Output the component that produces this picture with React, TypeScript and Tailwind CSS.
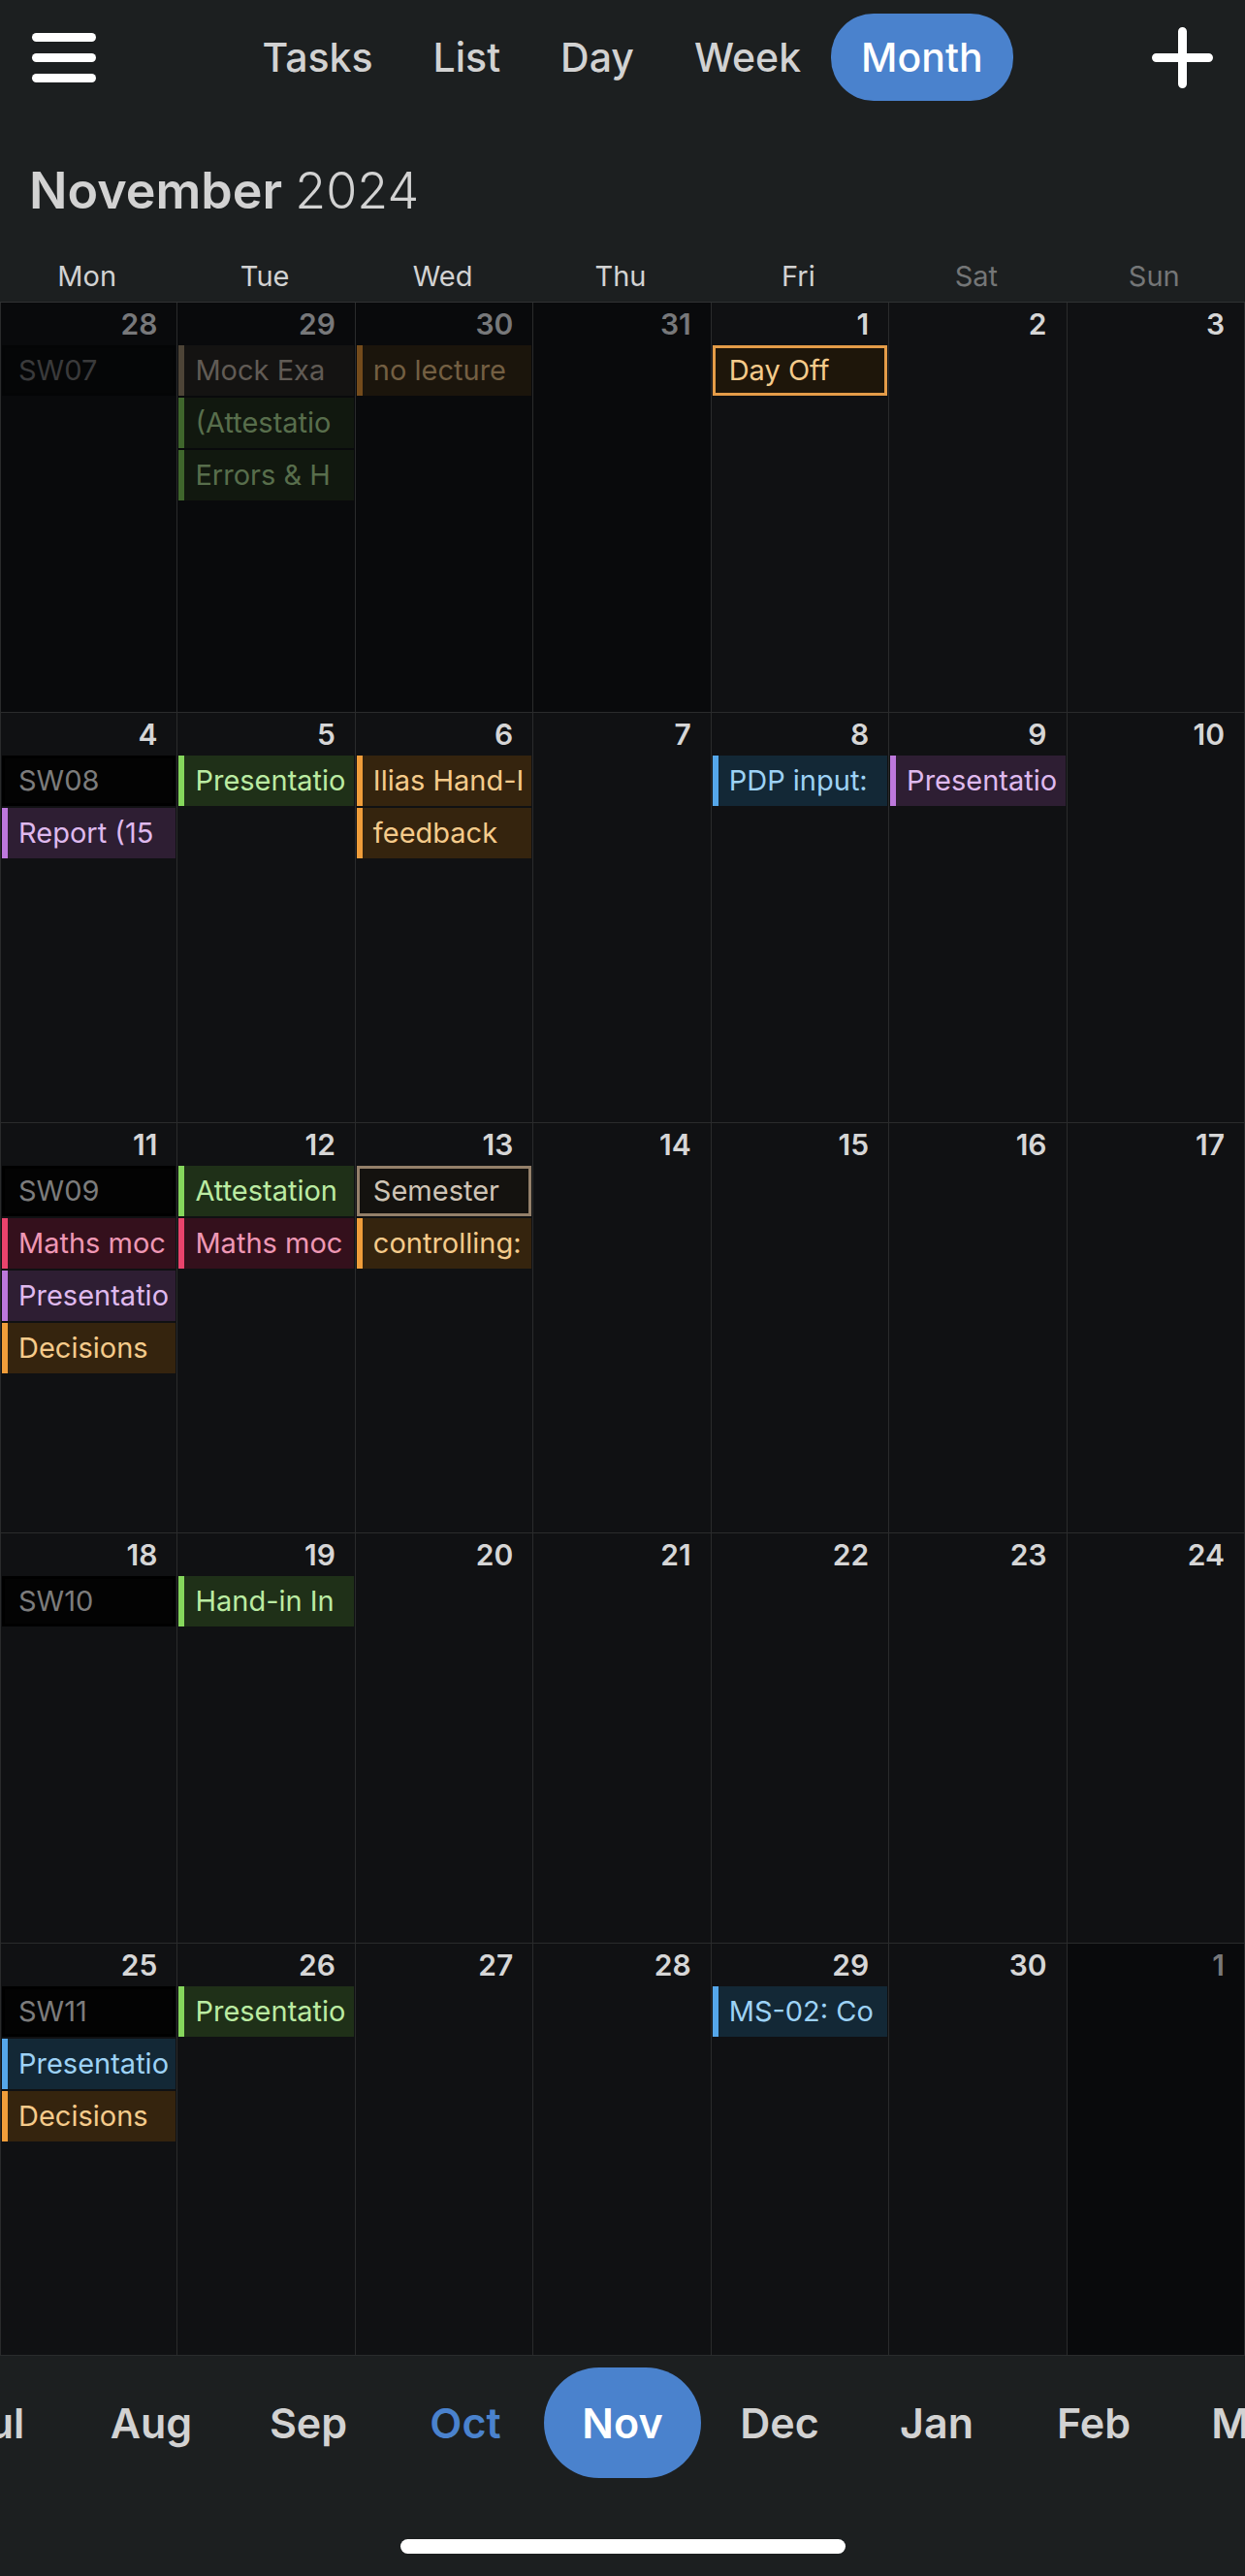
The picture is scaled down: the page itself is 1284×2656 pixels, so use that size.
type Tone = "green" | "orange" | "purple" | "blue" | "red" | "sand" | "orangeOutline" | "sandOutline" | "week";

type CalendarEvent = { title: string; tone: Tone };
type Day = { date: number; outside?: boolean; events?: CalendarEvent[] };

const tones: Record<Tone, string> = {
  green: "border-l-[6px] border-[#85d65c] bg-[#1f3018] text-[#bbeba2] pl-[11px]",
  orange: "border-l-[6px] border-[#f09d3a] bg-[#35240e] text-[#f5cb8b] pl-[11px]",
  purple: "border-l-[6px] border-[#bd78dc] bg-[#2e1e33] text-[#dfb9ee] pl-[11px]",
  blue: "border-l-[6px] border-[#55a7ea] bg-[#132836] text-[#9dd2f5] pl-[11px]",
  red: "border-l-[6px] border-[#e9436c] bg-[#34101c] text-[#ee97b4] pl-[11px]",
  sand: "border-l-[6px] border-[#a58e74] bg-[#24211f] text-[#cfc4b8] pl-[11px]",
  orangeOutline: "border-[3px] border-[#e49c48] bg-[#1e160a] text-[#f5cb8b] pl-3.5",
  sandOutline: "border-[3px] border-[#94806a] bg-[#14120f] text-[#cfc4b6] pl-3.5",
  week: "border-[3px] border-black bg-[#030303] text-[#7c7c7c] pl-3.5",
};

const mutedTones: Record<Tone, string> = {
  green: "border-l-[6px] border-[#3f662c] bg-[#11180f] text-[#586e4c] pl-[11px]",
  orange: "border-l-[6px] border-[#744b1b] bg-[#1b150c] text-[#735f42] pl-[11px]",
  purple: "border-l-[6px] border-[#5b3a69] bg-[#17101a] text-[#695870] pl-[11px]",
  blue: "border-l-[6px] border-[#2a5070] bg-[#0b151c] text-[#4b6373] pl-[11px]",
  red: "border-l-[6px] border-[#6f2135] bg-[#1a0a10] text-[#704856] pl-[11px]",
  sand: "border-l-[6px] border-[#4d4437] bg-[#141312] text-[#615b55] pl-[11px]",
  orangeOutline: "border-[3px] border-[#6c4a24] bg-[#100c07] text-[#735f42] pl-3.5",
  sandOutline: "border-[3px] border-[#473e34] bg-[#0c0b0a] text-[#625d57] pl-3.5",
  week: "border-[3px] border-[#040506] bg-[#050607] text-[#3a3a3b] pl-3.5",
};

const views = ["Tasks", "List", "Day", "Week", "Month"];
const weekdays = ["Mon", "Tue", "Wed", "Thu", "Fri", "Sat", "Sun"];
const months = ["Jul", "Aug", "Sep", "Oct", "Nov", "Dec", "Jan", "Feb", "Mar"];

const weeks: Day[][] = [
  [
    { date: 28, outside: true, events: [{ title: "SW07", tone: "week" }] },
    {
      date: 29,
      outside: true,
      events: [
        { title: "Mock Exa", tone: "sand" },
        { title: "(Attestatio", tone: "green" },
        { title: "Errors & H", tone: "green" },
      ],
    },
    { date: 30, outside: true, events: [{ title: "no lecture", tone: "orange" }] },
    { date: 31, outside: true },
    { date: 1, events: [{ title: "Day Off", tone: "orangeOutline" }] },
    { date: 2 },
    { date: 3 },
  ],
  [
    {
      date: 4,
      events: [
        { title: "SW08", tone: "week" },
        { title: "Report (15", tone: "purple" },
      ],
    },
    { date: 5, events: [{ title: "Presentatio", tone: "green" }] },
    {
      date: 6,
      events: [
        { title: "Ilias Hand-I", tone: "orange" },
        { title: "feedback", tone: "orange" },
      ],
    },
    { date: 7 },
    { date: 8, events: [{ title: "PDP input:", tone: "blue" }] },
    { date: 9, events: [{ title: "Presentatio", tone: "purple" }] },
    { date: 10 },
  ],
  [
    {
      date: 11,
      events: [
        { title: "SW09", tone: "week" },
        { title: "Maths moc", tone: "red" },
        { title: "Presentatio", tone: "purple" },
        { title: "Decisions", tone: "orange" },
      ],
    },
    {
      date: 12,
      events: [
        { title: "Attestation", tone: "green" },
        { title: "Maths moc", tone: "red" },
      ],
    },
    {
      date: 13,
      events: [
        { title: "Semester", tone: "sandOutline" },
        { title: "controlling:", tone: "orange" },
      ],
    },
    { date: 14 },
    { date: 15 },
    { date: 16 },
    { date: 17 },
  ],
  [
    { date: 18, events: [{ title: "SW10", tone: "week" }] },
    { date: 19, events: [{ title: "Hand-in In", tone: "green" }] },
    { date: 20 },
    { date: 21 },
    { date: 22 },
    { date: 23 },
    { date: 24 },
  ],
  [
    {
      date: 25,
      events: [
        { title: "SW11", tone: "week" },
        { title: "Presentatio", tone: "blue" },
        { title: "Decisions", tone: "orange" },
      ],
    },
    { date: 26, events: [{ title: "Presentatio", tone: "green" }] },
    { date: 27 },
    { date: 28 },
    { date: 29, events: [{ title: "MS-02: Co", tone: "blue" }] },
    { date: 30 },
    { date: 1, outside: true },
  ],
];

function DayCell({ day }: { day: Day }) {
  const palette = day.outside ? mutedTones : tones;
  return (
    <td
      className={`border-r border-b border-[#2a2b2c] p-0 align-top first:border-l ${
        day.outside ? "bg-[#090a0c]" : "bg-[#101113]"
      }`}
    >
      <div
        className={`h-11 pr-5 text-right text-[30px] leading-11 font-semibold ${
          day.outside ? "text-[#77787a]" : "text-[#d6d6d6]"
        }`}
      >
        {day.date}
      </div>
      <ul className="flex flex-col gap-0.5 px-px">
        {day.events?.map((event, i) => (
          <li key={i}>
            <button
              type="button"
              className={`flex h-[52px] w-full items-center overflow-hidden text-left text-[29px] leading-9 whitespace-nowrap ${palette[event.tone]}`}
            >
              {event.title}
            </button>
          </li>
        ))}
      </ul>
    </td>
  );
}

export default function App() {
  return (
    <div className="flex min-h-screen flex-col overflow-hidden bg-[#1c1f20] font-['Inter',sans-serif] text-[#d2d2d2]">
      <header className="flex items-center justify-between px-[33px] pt-3.5">
        <button type="button" aria-label="Open menu" className="flex w-[66px] flex-col gap-3">
          <span className="h-[9px] rounded-full bg-white" />
          <span className="h-[9px] rounded-full bg-white" />
          <span className="h-[9px] rounded-full bg-white" />
        </button>
        <nav aria-label="Calendar view" className="flex">
          {views.map((view) => (
            <button
              key={view}
              type="button"
              aria-pressed={view === "Month"}
              className={`h-[90px] rounded-[44px] px-[31px] text-[41px] leading-none font-medium ${
                view === "Month" ? "bg-[#4a82cd] text-white" : ""
              }`}
            >
              {view}
            </button>
          ))}
        </nav>
        <button type="button" aria-label="Add event" className="flex w-[66px] justify-end">
          <svg width="63" height="63" viewBox="0 0 63 63" fill="none" stroke="white" strokeWidth="9" strokeLinecap="round" aria-hidden="true">
            <path d="M31.5 4.5v54M4.5 31.5h54" />
          </svg>
        </button>
      </header>

      <h1 className="px-[30px] pt-[61px] text-[52px] leading-16 font-semibold">
        November <span className="font-light">2024</span>
      </h1>

      <table className="mt-[26px] w-full table-fixed border-separate border-spacing-0">
        <thead>
          <tr>
            {weekdays.map((name) => (
              <th
                key={name}
                scope="col"
                className={`h-[57px] border-b border-[#303233] pt-1 pr-1 pb-0 pl-0 align-middle text-[29px] leading-9 font-normal ${
                  name.startsWith("S") ? "text-[#747677]" : ""
                }`}
              >
                {name}
              </th>
            ))}
          </tr>
        </thead>
        <tbody>
          {weeks.map((week, i) => (
            <tr key={i} className="h-[423px] last:h-[425px]">
              {week.map((day, j) => (
                <DayCell key={j} day={day} />
              ))}
            </tr>
          ))}
        </tbody>
      </table>

      <nav aria-label="Month" className="mt-3 flex justify-center">
        {months.map((month) => (
          <button
            key={month}
            type="button"
            aria-current={month === "Nov" ? "date" : undefined}
            className={`h-[114px] w-[162px] shrink-0 rounded-[57px] text-[43px] leading-none font-semibold ${
              month === "Nov" ? "bg-[#4a82cd] text-white" : month === "Oct" ? "text-[#4a82cd]" : ""
            }`}
          >
            {month}
          </button>
        ))}
      </nav>

      <div className="mx-auto mt-auto mb-[23px] h-[15px] w-[459px] rounded-full bg-white" />
    </div>
  );
}
